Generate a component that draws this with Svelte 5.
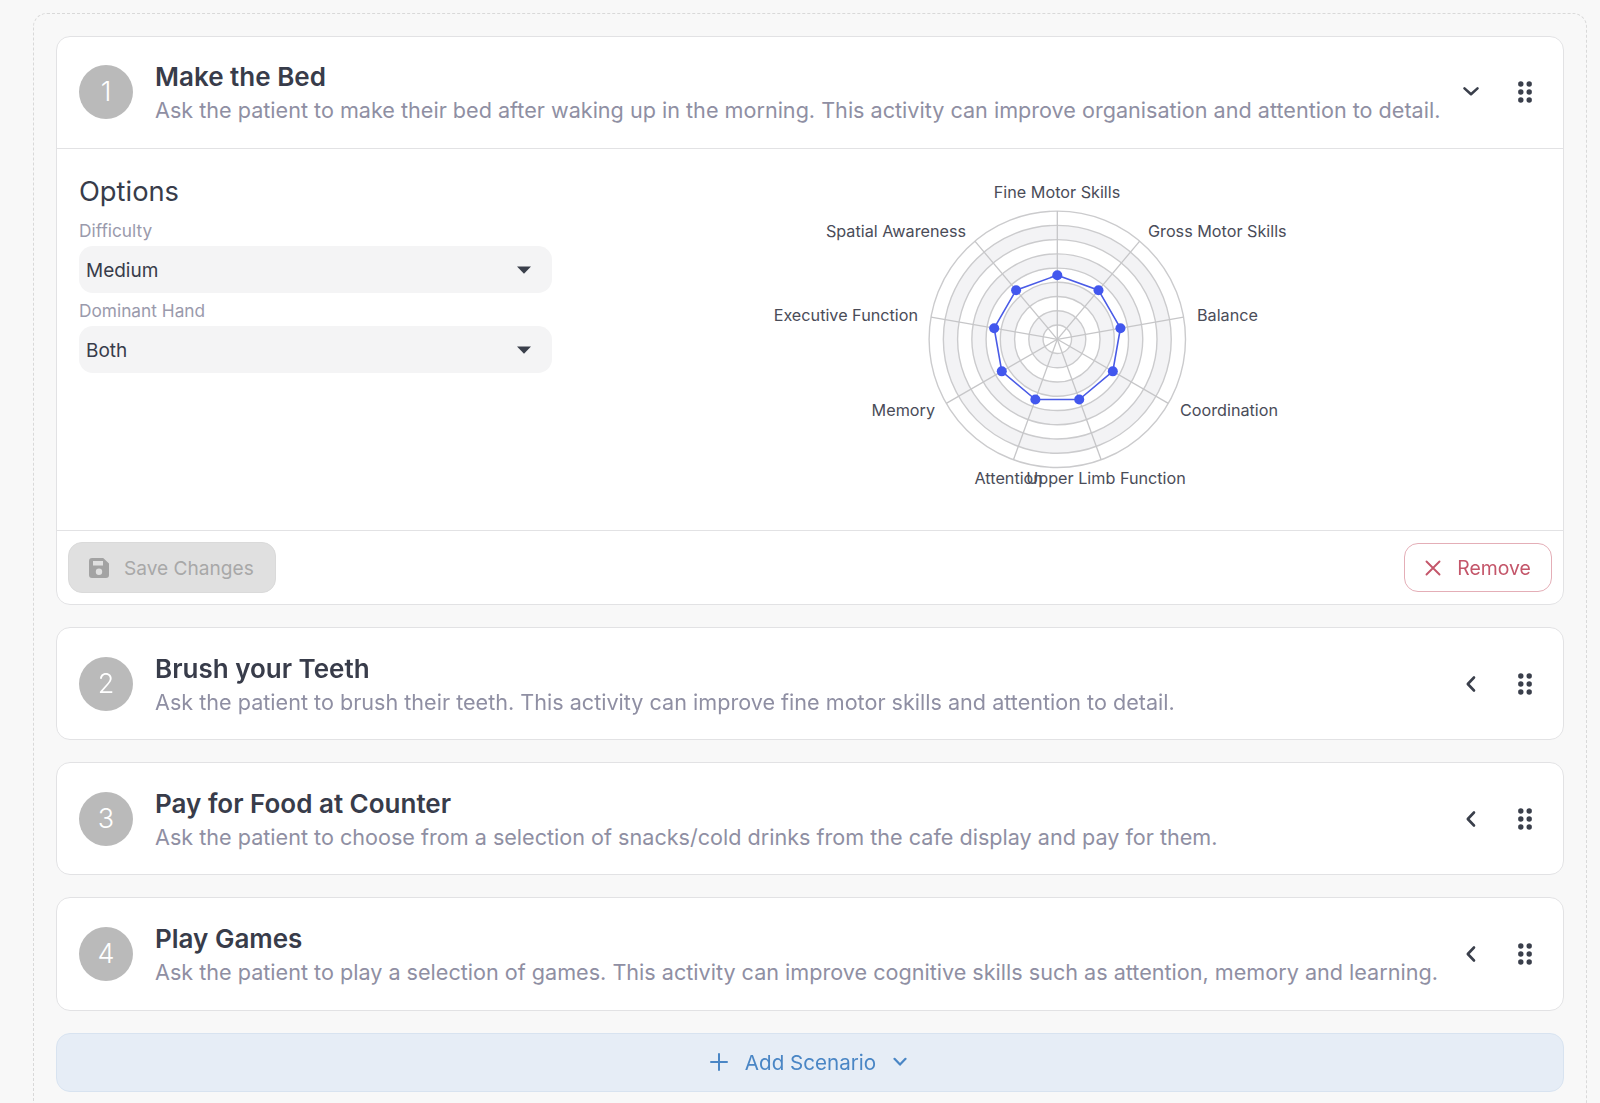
<script>
  const scenarios = [
    { title: "Make the Bed", text: "Ask the patient to make their bed after waking up in the morning. This activity can improve organisation and attention to detail.", open: true },
    { title: "Brush your Teeth", text: "Ask the patient to brush their teeth. This activity can improve fine motor skills and attention to detail." },
    { title: "Pay for Food at Counter", text: "Ask the patient to choose from a selection of snacks/cold drinks from the cafe display and pay for them." },
    { title: "Play Games", text: "Ask the patient to play a selection of games. This activity can improve cognitive skills such as attention, memory and learning." },
  ];

  // radar geometry, centre is relative to the svg box
  const cx = 297.3;
  const cy = 169.3;
  const radius = 128.2;
  const steps = 9;
  const value = 4.5;
  const axes = 9;

  const point = (i, r) => {
    const a = (i / axes) * Math.PI * 2 - Math.PI / 2;
    return [cx + Math.cos(a) * r, cy + Math.sin(a) * r];
  };

  const rings = Array.from({ length: steps }, (_, i) => ((steps - i) / steps) * radius);
  const spokes = Array.from({ length: axes }, (_, i) => point(i, radius));
  const dots = Array.from({ length: axes }, (_, i) => point(i, (value / steps) * radius));
  const outline = dots.map((d) => d.join(",")).join(" ");

  const labels = [
    { text: "Fine Motor Skills", x: 297, y: 22, anchor: "middle" },
    { text: "Gross Motor Skills", x: 388, y: 61, anchor: "start" },
    { text: "Balance", x: 437, y: 145.3, anchor: "start" },
    { text: "Coordination", x: 420, y: 240, anchor: "start" },
    { text: "Upper Limb Function", x: 346, y: 307.6, anchor: "middle" },
    { text: "Attention", x: 214.5, y: 307.6, anchor: "start" },
    { text: "Memory", x: 175, y: 240, anchor: "end" },
    { text: "Executive Function", x: 158, y: 145.3, anchor: "end" },
    { text: "Spatial Awareness", x: 206, y: 61, anchor: "end" },
  ];
</script>

<div class="board">
  {#each scenarios as item, i}
    <section class="card">
      <header class="head" class:divided={item.open}>
        <div class="num">{i + 1}</div>
        <div class="copy">
          <h2>{item.title}</h2>
          <p>{item.text}</p>
        </div>
        <svg class="chevron" viewBox="0 0 18 18" width="18" height="18" fill="none" stroke="#3a3f4b" stroke-width="2.6" stroke-linecap="round" stroke-linejoin="round">
          {#if item.open}
            <path d="M2.5 5.4 9 11.2l6.5-5.8" />
          {:else}
            <path d="M12 2.5 5.8 9l6.2 6.5" />
          {/if}
        </svg>
        <svg class="grip" viewBox="0 0 14 22" width="14" height="22" fill="#3a3f4b">
          {#each [3, 11, 19] as y}
            <circle cx="2.8" cy={y} r="2.7" />
            <circle cx="11.2" cy={y} r="2.7" />
          {/each}
        </svg>
      </header>

      {#if item.open}
        <div class="body">
          <div class="options">
            <h3>Options</h3>
            <div class="label">Difficulty</div>
            <div class="select">
              <span>Medium</span>
              <svg viewBox="0 0 14 8" width="14" height="8" fill="#3a3f4b"><path d="M0 .5h14L7 7.8z" /></svg>
            </div>
            <div class="label second">Dominant Hand</div>
            <div class="select">
              <span>Both</span>
              <svg viewBox="0 0 14 8" width="14" height="8" fill="#3a3f4b"><path d="M0 .5h14L7 7.8z" /></svg>
            </div>
          </div>

          <svg class="radar" viewBox="0 0 560 330" width="560" height="330">
            {#each rings as r, n}
              <circle cx={cx} cy={cy} r={r} fill={n % 2 === 1 ? "#f3f3f5" : "#ffffff"} stroke="#cbcbcd" stroke-width="1.4" />
            {/each}
            {#each spokes as s}
              <line x1={cx} y1={cy} x2={s[0]} y2={s[1]} stroke="#c6c6c8" stroke-width="1.3" />
            {/each}
            <polygon points={outline} fill="none" stroke="#4a5be6" stroke-width="1.6" />
            {#each dots as d}
              <circle cx={d[0]} cy={d[1]} r="5" fill="#4257ee" />
            {/each}
            {#each labels as l}
              <text x={l.x} y={l.y} text-anchor={l.anchor} dominant-baseline="central">{l.text}</text>
            {/each}
          </svg>
        </div>

        <footer class="foot">
          <button class="save" type="button" disabled>
            <svg viewBox="0 0 20 20" width="20" height="20" fill="#a3a3a3">
              <path fill-rule="evenodd" d="M3 0h11.2L20 5.6V17a3 3 0 0 1-3 3H3a3 3 0 0 1-3-3V3a3 3 0 0 1 3-3Zm1 3v4.6h10V3H4Zm6 7.6a3.2 3.2 0 1 0 0 6.4 3.2 3.2 0 0 0 0-6.4Z" />
            </svg>
            Save Changes
          </button>
          <button class="remove" type="button">
            <svg viewBox="0 0 16 16" width="16" height="16" fill="none" stroke="#c4566a" stroke-width="1.9" stroke-linecap="round">
              <path d="M1.5 1.5l13 13M14.5 1.5l-13 13" />
            </svg>
            Remove
          </button>
        </footer>
      {/if}
    </section>
  {/each}

  <button class="add" type="button">
    <svg viewBox="0 0 18 18" width="18" height="18" fill="none" stroke="#4a86c5" stroke-width="2" stroke-linecap="round">
      <path d="M9 1v16M1 9h16" />
    </svg>
    <span>Add Scenario</span>
    <svg viewBox="0 0 14 10" width="14" height="10" fill="none" stroke="#4a86c5" stroke-width="2.2" stroke-linecap="round" stroke-linejoin="round">
      <path d="M1.5 1.8 7 7.6l5.5-5.8" />
    </svg>
  </button>
</div>

<style>
  :global(body) {
    margin: 0;
    background: #f8f8f8;
    overflow: hidden;
    font-family: Inter, "Liberation Sans", sans-serif;
  }

  /* the capture is slightly soft, a touch of blur keeps edges comparable */
  .board {
    display: flex;
    flex-direction: column;
    gap: 22px;
    margin: 13px 13px 0 33px;
    padding: 22px;
    border: 1px dashed #d9d9d9;
    border-radius: 14px;
    filter: blur(0.4px);
  }

  .card {
    background: #fff;
    border: 1px solid #e2e2e4;
    border-radius: 14px;
  }

  .head {
    display: flex;
    align-items: center;
    height: 111.2px;
    padding: 0 31px 0 22px;
  }

  .head.divided {
    box-sizing: border-box;
    height: 112px;
    padding-bottom: 2px;
    border-bottom: 1px solid #e2e2e4;
  }

  .num {
    flex: none;
    display: flex;
    align-items: center;
    justify-content: center;
    width: 54px;
    height: 54px;
    border-radius: 50%;
    background: #bababa;
    color: #fff;
    font-size: 27px;
    font-weight: 300;
  }

  .copy {
    flex: 1;
    margin-left: 22px;
    padding-top: 2px;
  }

  h2 {
    margin: 0;
    font-size: 26px;
    line-height: 34px;
    font-weight: 600;
    color: #383c4a;
  }

  p {
    margin: 0;
    font-size: 21.6px;
    line-height: 32px;
    white-space: nowrap;
    color: #8f8fa3;
  }

  .chevron {
    flex: none;
  }

  .grip {
    flex: none;
    margin-left: 38px;
  }

  .body {
    display: flex;
    height: 381px;
    box-sizing: border-box;
    padding: 25px 22px 0;
  }

  .options {
    flex: none;
    width: 473px;
  }

  h3 {
    margin: 0 0 9px;
    font-size: 27.3px;
    line-height: 36px;
    font-weight: 400;
    color: #383c4a;
  }

  .label {
    margin-bottom: 3px;
    font-size: 17.3px;
    line-height: 24px;
    color: #9a9aac;
  }

  .label.second {
    margin: 6px 0 3px;
  }

  .select {
    display: flex;
    align-items: center;
    justify-content: space-between;
    box-sizing: border-box;
    height: 47px;
    padding: 1px 21px 0 7px;
    border-radius: 14px;
    background: #f4f4f5;
    color: #383c4a;
    font-size: 19px;
  }

  .radar {
    flex: none;
    margin: -4px 0 0 208px;
  }

  .radar text {
    font-family: Inter, "Liberation Sans", sans-serif;
    font-size: 16.2px;
    fill: #4a4c58;
  }

  .foot {
    display: flex;
    align-items: center;
    justify-content: space-between;
    height: 73px;
    padding: 0 11px;
    border-top: 1px solid #e2e2e4;
  }

  button {
    display: flex;
    align-items: center;
    justify-content: center;
    box-sizing: border-box;
    font-family: inherit;
    font-size: 19.4px;
    font-weight: 400;
  }

  .save {
    justify-content: flex-start;
    gap: 15px;
    width: 208px;
    height: 51px;
    padding: 0 0 0 20px;
    border: 1px solid #dadada;
    border-radius: 14px;
    background: #e0e0e0;
    color: #a8a8a8;
    font-size: 19.1px;
  }

  .remove {
    gap: 16px;
    width: 148px;
    height: 49px;
    border: 1.5px solid #e4aeb7;
    border-radius: 14px;
    background: #fff;
    color: #c4566a;
  }

  .add {
    gap: 17px;
    width: 100%;
    height: 59.5px;
    padding: 0 3px 0 0;
    border: 1px solid #d8e3f0;
    border-radius: 14px;
    background: #e6edf6;
    color: #4a86c5;
    font-size: 20.6px;
  }
</style>
